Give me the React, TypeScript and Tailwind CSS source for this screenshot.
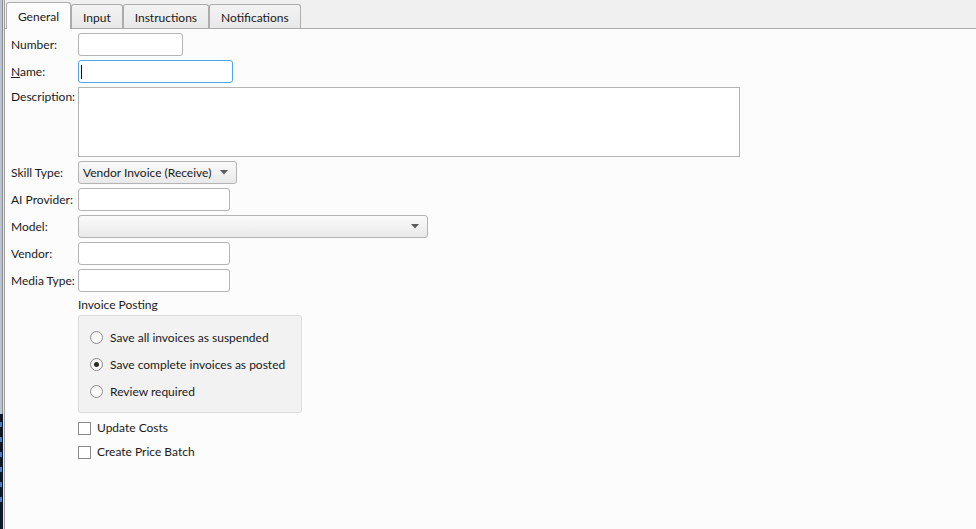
import { ReactNode } from 'react';

const font = { fontFamily: 'Lato, "Noto Sans", sans-serif' };

function Field({ label, children, top = false }: { label: ReactNode; children: ReactNode; top?: boolean }) {
  return (
    <div className={`flex ${top ? 'items-start' : 'items-center'} gap-0`}>
      <div className={`w-[67px] shrink-0 text-[12px] text-[#1a1a1a] ${top ? 'pt-[1px]' : ''}`}>{label}</div>
      {children}
    </div>
  );
}

function TextBox({ w, focused = false }: { w: string; focused?: boolean }) {
  return (
    <div
      className={`${w} h-[23px] rounded-[3px] bg-white border flex items-center ${
        focused ? 'border-[#4ea6ee]' : 'border-[#b4b4b4]'
      }`}
    >
      {focused && <div className="ml-[2px] w-[1px] h-[14px] bg-black" />}
    </div>
  );
}

function Combo({ w, value }: { w: string; value?: string }) {
  return (
    <div
      className={`${w} h-[23px] rounded-[3px] border border-[#b4b4b4] bg-gradient-to-b from-[#fafafa] to-[#e9e9e9] flex items-center pl-[4px] pr-[8px]`}
    >
      <span className="flex-1 text-[12px] text-[#1a1a1a] whitespace-nowrap">{value}</span>
      <svg width="8" height="5" viewBox="0 0 8 5">
        <path d="M0 0h8L4 4.5z" fill="#5a5a5a" />
      </svg>
    </div>
  );
}

function Radio({ label, checked = false }: { label: string; checked?: boolean }) {
  return (
    <div className="flex items-center gap-[7px] h-[27px]">
      <div className="w-[13px] h-[13px] rounded-full border border-[#8a8a8a] bg-gradient-to-b from-[#f4f4f4] to-[#fdfdfd] flex items-center justify-center">
        {checked && <div className="w-[5px] h-[5px] rounded-full bg-[#2a2a2a]" />}
      </div>
      <span className="text-[12px] text-[#1a1a1a]">{label}</span>
    </div>
  );
}

function Check({ label }: { label: string }) {
  return (
    <div className="flex items-center gap-[6px] h-[24px]">
      <div className="w-[13px] h-[13px] border border-[#8a8a8a] bg-white" />
      <span className="text-[12px] text-[#1a1a1a]">{label}</span>
    </div>
  );
}

export default function App() {
  const tabs = ['Input', 'Instructions', 'Notifications'];

  return (
    <div className="flex h-[529px] w-[976px] bg-[#fcfcfc] overflow-hidden" style={font}>
      {/* window edge on the left */}
      <div className="flex flex-col w-[4px] shrink-0">
        <div className="h-[414px] flex">
          <div className="w-[2px] bg-[#b9c4d0]" />
          <div className="w-[1px] bg-[#8c8c8c]" />
          <div className="w-[1px] bg-[#e6e6e6]" />
        </div>
        <div className="flex-1 flex">
          <div className="w-[3px] bg-[#0f1a26] flex flex-col gap-[10px] pt-[8px]">
            {[0, 1, 2, 3, 4, 5].map((i) => (
              <div key={i} className="w-[2px] h-[5px] bg-[#4b7fc0]" />
            ))}
          </div>
          <div className="w-[1px] bg-[#e6e6e6]" />
        </div>
      </div>
      <div className="w-[1px] bg-[#a0a0a0] shrink-0" />

      <div className="flex-1 flex flex-col">
        {/* tab strip */}
        <div className="h-[29px] bg-[#f0f0f0] border-b border-[#acacac] flex items-end pl-[1px] relative">
          <div className="relative z-10 -mb-[1px] h-[27px] w-[65px] bg-[#fcfcfc] border border-b-0 border-[#acacac] rounded-t-[3px] flex items-center justify-center pt-[1px] text-[12px] text-[#1a1a1a]">
            General
          </div>
          {tabs.map((t) => (
            <div
              key={t}
              className="h-[24px] px-[11px] bg-gradient-to-b from-[#f3f3f3] to-[#e8e8e8] border border-b-0 border-[#acacac] rounded-t-[3px] flex items-center pt-[2px] text-[12px] text-[#1a1a1a]"
            >
              {t}
            </div>
          ))}
        </div>

        {/* general form */}
        <div className="flex flex-col pl-[6px] pt-[4px] gap-[4px]">
          <Field label="Number:">
            <TextBox w="w-[105px]" />
          </Field>
          <Field
            label={
              <span>
                <span className="underline">N</span>ame:
              </span>
            }
          >
            <TextBox w="w-[155px]" focused />
          </Field>
          <Field label="Description:" top>
            <div className="w-[662px] h-[70px] bg-white border border-[#b4b4b4]" />
          </Field>
          <Field label="Skill Type:">
            <Combo w="w-[159px]" value="Vendor Invoice (Receive)" />
          </Field>
          <Field label="AI Provider:">
            <TextBox w="w-[152px]" />
          </Field>
          <Field label="Model:">
            <Combo w="w-[350px]" />
          </Field>
          <Field label="Vendor:">
            <TextBox w="w-[152px]" />
          </Field>
          <Field label="Media Type:">
            <TextBox w="w-[152px]" />
          </Field>

          <div className="pl-[67px] flex flex-col">
            <div className="text-[12px] text-[#1a1a1a] h-[18px] leading-[18px]">Invoice Posting</div>
            <div className="mt-[1px] w-[224px] h-[98px] rounded-[3px] border border-[#dcdcdc] bg-[#f2f2f2] pl-[11px] pt-[8px]">
              <Radio label="Save all invoices as suspended" />
              <Radio label="Save complete invoices as posted" checked />
              <Radio label="Review required" />
            </div>
            <div className="mt-[3px]">
              <Check label="Update Costs" />
              <Check label="Create Price Batch" />
            </div>
          </div>
        </div>
      </div>
    </div>
  );
}
